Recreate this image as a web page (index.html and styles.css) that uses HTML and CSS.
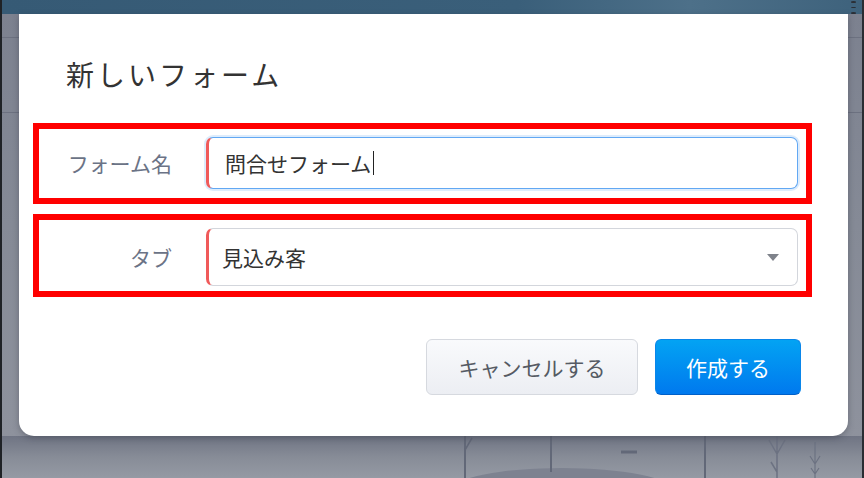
FILE: index.html
```html
<!DOCTYPE html>
<html lang="ja">
<head>
    <meta charset="UTF-8">
    <title>新しいフォーム</title>
    <link rel="stylesheet" href="styles.css">
</head>
<body>
    <div class="app">
        <div class="topbar">
            <div class="dots">
                <span></span><span></span><span></span>
            </div>
        </div>
        <div class="app-body">
            <div class="rule rule-1"></div>
            <div class="rule rule-2"></div>
        </div>
        <div class="app-foot">
            <svg width="862" height="42" viewBox="0 0 862 42">
                <ellipse cx="560" cy="54" rx="110" ry="22" fill="#7d8290"/>
                <line x1="463" y1="0" x2="463" y2="42" stroke="#626878" stroke-width="2"/>
                <line x1="463" y1="14" x2="470" y2="2" stroke="#626878" stroke-width="1.5"/>
                <line x1="549" y1="0" x2="549" y2="36" stroke="#626878" stroke-width="2"/>
                <line x1="619" y1="16" x2="635" y2="16" stroke="#626878" stroke-width="3"/>
                <line x1="703" y1="0" x2="703" y2="42" stroke="#626878" stroke-width="2"/>
                <path d="M775 0 V42 M775 18 L767 4 M775 18 L783 4 M775 36 L769 26" stroke="#6c7282" stroke-width="1.5" fill="none"/>
                <path d="M813 6 V42 M813 28 L808 20 M813 28 L818 20 M813 38 L809 32 M813 38 L817 32" stroke="#6c7282" stroke-width="1.2" fill="none"/>
            </svg>
        </div>
    </div>

    <div class="modal">
        <h1 class="modal-title">新しいフォーム</h1>

        <div class="field-box">
            <label class="field-label">フォーム名</label>
            <div class="field-input is-focused">
                <span class="field-text">問合せフォーム</span><span class="caret"></span>
            </div>
        </div>

        <div class="field-box is-tall">
            <label class="field-label">タブ</label>
            <div class="field-input is-select">
                <span class="field-text">見込み客</span>
                <svg class="select-arrow" width="12" height="7" viewBox="0 0 12 7">
                    <path d="M0 0 H12 L6 7 Z" fill="#7f838b"/>
                </svg>
            </div>
        </div>

        <div class="modal-actions">
            <button class="btn btn-cancel">キャンセルする</button>
            <button class="btn btn-primary">作成する</button>
        </div>
    </div>
</body>
</html>
```

FILE: styles.css
```css
body {
    margin: 0;
    width: 864px;
    height: 478px;
    overflow: hidden;
    position: relative;
    font-family: "Noto Sans CJK JP", "Noto Sans", sans-serif;
    background: #8d919c;
}

/* dimmed application behind the dialog */
.app {
    box-sizing: border-box;
    width: 864px;
    height: 478px;
    display: flex;
    flex-direction: column;
    border-left: 2px solid #1f2226;
    border-right: 2px solid #2a2d33;
}

.topbar {
    height: 14px;
    background: linear-gradient(90deg, #365a75 0%, #3a5f7a 60%, #4d7089 80%, #3e627c 100%);
    display: flex;
    justify-content: flex-end;
    padding-right: 6px;
}

.dots {
    display: flex;
    flex-direction: column;
    gap: 4px;
    padding-top: 1px;
}

.dots span {
    width: 5px;
    height: 5px;
    border-radius: 50%;
    background: #2b2f36;
}

.app-body {
    flex: 1;
    background: linear-gradient(180deg, #7c818f 0%, #858a96 50%, #8e929d 100%);
    display: flex;
    flex-direction: column;
}

.rule {
    height: 1px;
    background: #6c7180;
}

.rule-1 {
    margin-top: 23px;
}

.rule-2 {
    margin-top: 74px;
}

.app-foot {
    height: 42px;
    background: linear-gradient(180deg, #6f7483 0%, #878c97 50%, #959aa4 100%);
}

.app-foot svg {
    display: block;
}

/* the modal dialog */
.modal {
    position: absolute;
    left: 19px;
    top: 14px;
    width: 829px;
    height: 422px;
    box-sizing: border-box;
    background: #ffffff;
    border-radius: 0 0 15px 15px;
    box-shadow: 0 2px 6px rgba(40, 44, 55, 0.35);
    padding: 40px 47px 0 14px;
}

.modal-title {
    margin: 0 0 29px 33px;
    font-size: 28px;
    line-height: 40px;
    font-weight: normal;
    color: #333333;
    letter-spacing: 3px;
}

.field-box {
    box-sizing: border-box;
    width: 779px;
    border: 6px solid #ff0000;
    display: flex;
    align-items: center;
    padding: 8px 8px 9px 0;
    margin-bottom: 10px;
}

.field-box.is-tall {
    padding-bottom: 5px;
}

.field-label {
    width: 133px;
    flex: none;
    text-align: right;
    font-size: 21px;
    color: #6b7386;
    margin-right: 34px;
}

.field-input {
    flex: 1;
    height: 52px;
    box-sizing: border-box;
    display: flex;
    align-items: center;
    padding: 0 16px 0 16px;
    border: 1px solid #d3d6dc;
    border-left: 3px solid #f05a5a;
    border-radius: 7px;
    background: #ffffff;
}

.field-input.is-focused {
    border-color: #62a8f3;
    border-left-color: #f05a5a;
    box-shadow: 0 0 0 2px rgba(98, 168, 243, 0.22);
}

.field-input.is-select {
    height: 58px;
    justify-content: space-between;
    padding-right: 18px;
    padding-left: 13px;
}

.field-text {
    font-size: 21px;
    color: #333333;
}

.caret {
    width: 1px;
    height: 24px;
    background: #222222;
    margin-left: 2px;
}

.select-arrow {
    display: block;
}

.modal-actions {
    display: flex;
    justify-content: flex-end;
    gap: 17px;
    margin-top: 42px;
}

.btn {
    height: 56px;
    border-radius: 6px;
    font-family: inherit;
    font-size: 21px;
    cursor: pointer;
}

.btn-cancel {
    width: 212px;
    color: #555a63;
    background: linear-gradient(180deg, #f9fafc 0%, #eceef3 100%);
    border: 1px solid #d6d9df;
}

.btn-primary {
    width: 146px;
    color: #ffffff;
    background: linear-gradient(180deg, #03a3f3 0%, #0079ee 100%);
    border: 1px solid #0a86ea;
    border-bottom-color: #0060c8;
}
```
